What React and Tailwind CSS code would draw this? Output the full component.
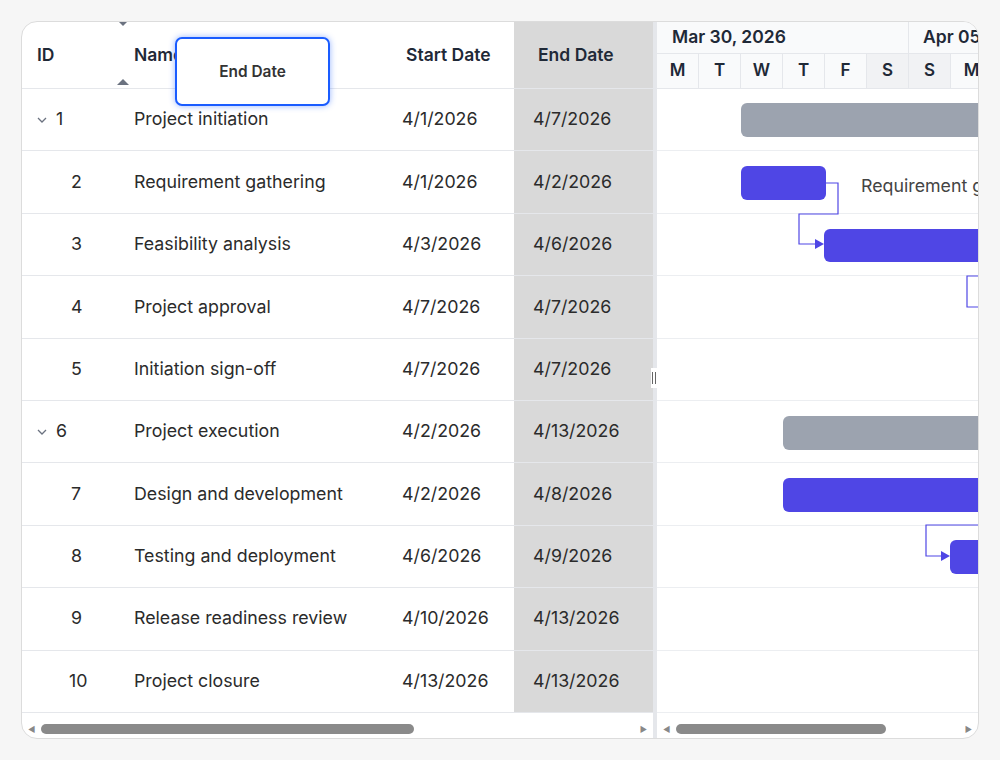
import React from "react";

const rows = [
  { id: 1, name: "Project initiation", s: "4/1/2026", e: "4/7/2026", parent: true },
  { id: 2, name: "Requirement gathering", s: "4/1/2026", e: "4/2/2026" },
  { id: 3, name: "Feasibility analysis", s: "4/3/2026", e: "4/6/2026" },
  { id: 4, name: "Project approval", s: "4/7/2026", e: "4/7/2026" },
  { id: 5, name: "Initiation sign-off", s: "4/7/2026", e: "4/7/2026" },
  { id: 6, name: "Project execution", s: "4/2/2026", e: "4/13/2026", parent: true },
  { id: 7, name: "Design and development", s: "4/2/2026", e: "4/8/2026" },
  { id: 8, name: "Testing and deployment", s: "4/6/2026", e: "4/9/2026" },
  { id: 9, name: "Release readiness review", s: "4/10/2026", e: "4/13/2026" },
  { id: 10, name: "Project closure", s: "4/13/2026", e: "4/13/2026" },
];
const days = ["M", "T", "W", "T", "F", "S", "S", "M"];

export default function App() {
  return (
    <div className="w-[1000px] h-[760px] bg-[#f6f6f6] p-[21px] text-[#1f2937]" style={{ fontFamily: "Inter, 'Noto Sans', sans-serif" }}>
      <div className="relative w-[958px] h-[718px] bg-white border border-[#dcdcdc] rounded-[16px] overflow-hidden flex">
        {/* left grid */}
        <div className="w-[631px] flex flex-col">
          <div className="h-[67px] flex border-b border-[#e5e7eb] text-[17.5px] font-semibold">
            <div className="w-[100px] pl-[15px] flex items-center">ID</div>
            <div className="w-[263px] pl-[12px] flex items-center">Name</div>
            <div className="w-[129px] pl-[21px] flex items-center">Start Date</div>
            <div className="w-[139px] pl-[24px] flex items-center bg-[#d9d9d9]">End Date</div>
          </div>
          {rows.map((r) => (
            <div key={r.id} className="h-[62.4px] flex border-b border-[#e5e7eb] text-[17.8px] text-[#2b2b2b]">
              <div className="w-[100px] flex items-center">
                {r.parent ? (
                  <span className="flex items-center pl-[14px] gap-[8px]">
                    <svg width="12" height="12" viewBox="0 0 12 12"><path d="M2 4l4 4 4-4" fill="none" stroke="#6b7280" strokeWidth="1.3" /></svg>
                    {r.id}
                  </span>
                ) : (
                  <span className={r.id === 10 ? "pl-[47px]" : "pl-[49px]"}>{r.id}</span>
                )}
              </div>
              <div className="w-[263px] pl-[12px] flex items-center whitespace-nowrap">{r.name}</div>
              <div className="w-[129px] pl-[17px] flex items-center">{r.s}</div>
              <div className="w-[139px] pl-[19px] flex items-center bg-[#d9d9d9] whitespace-nowrap">{r.e}</div>
            </div>
          ))}
          <div className="flex-1 flex items-center px-[6px] gap-[6px] pt-[8px]">
            <span className="text-[#888] text-[8px]">◀</span>
            <div className="w-[373px] h-[10px] rounded-full bg-[#8a8a8a]" />
            <div className="flex-1" />
            <span className="text-[#888] text-[8px]">▶</span>
          </div>
        </div>
        {/* splitter */}
        <div className="relative w-[4px] bg-[#e5e7eb]">
          <div className="absolute top-[346px] -left-[2px] w-[6px] h-[20px] bg-white flex items-center justify-center gap-[2px]">
            <div className="w-[1px] h-[12px] bg-[#666]" /><div className="w-[1px] h-[12px] bg-[#666]" />
          </div>
        </div>
        {/* chart */}
        <div className="flex-1 flex flex-col overflow-hidden">
          <div className="h-[67px] border-b border-[#e5e7eb] bg-[#f9fafb] flex flex-col">
            <div className="h-[32px] flex border-b border-[#e5e7eb] text-[17.5px] font-semibold">
              <div className="w-[252px] shrink-0 pl-[15px] flex items-center border-r border-[#e5e7eb] whitespace-nowrap">Mar 30, 2026</div>
              <div className="shrink-0 pl-[14px] flex items-center whitespace-nowrap">Apr 05, 2026</div>
            </div>
            <div className="flex-1 flex text-[17px] font-semibold">
              {days.map((d, i) => (
                <div key={i} className={`w-[42px] shrink-0 flex items-center justify-center border-r border-[#e5e7eb] ${i === 5 || i === 6 ? "bg-[#f1f2f4]" : ""}`}>{d}</div>
              ))}
            </div>
          </div>
          <div className="relative">
            {rows.map((r) => (
              <div key={r.id} className="h-[62.4px] border-b border-[#eceef1]" />
            ))}
            <div className="absolute left-[84px] top-[14px] w-[300px] h-[34px] rounded-[6px] bg-[#9ca3af]" />
            <div className="absolute left-[84px] top-[77px] w-[85px] h-[34px] rounded-[6px] bg-[#4f46e5]" />
            <div className="absolute left-[204px] top-[84px] text-[17.8px] text-[#444] whitespace-nowrap">Requirement gathering</div>
            <div className="absolute left-[167px] top-[140px] w-[300px] h-[33px] rounded-[6px] bg-[#4f46e5]" />
            <div className="absolute left-[126px] top-[327px] w-[300px] h-[34px] rounded-[6px] bg-[#9ca3af]" />
            <div className="absolute left-[126px] top-[389px] w-[300px] h-[34px] rounded-[6px] bg-[#4f46e5]" />
            <div className="absolute left-[293px] top-[451px] w-[100px] h-[34px] rounded-[6px] bg-[#4f46e5]" />
            <svg className="absolute left-0 top-0" width="330" height="500">
              <path d="M169 94 H181 V125 H142 V155 H160" fill="none" stroke="#4f46e5" strokeWidth="1.2" />
              <path d="M158 150 L167 155 L158 160 Z" fill="#4f46e5" />
              <path d="M330 187 H310 V218 H330" fill="none" stroke="#4f46e5" strokeWidth="1.2" />
              <path d="M330 436 H269 V467 H286" fill="none" stroke="#4f46e5" strokeWidth="1.2" />
              <path d="M284 462 L293 467 L284 472 Z" fill="#4f46e5" />
            </svg>
          </div>
          <div className="flex-1 flex items-center px-[6px] gap-[6px] pt-[8px]">
            <span className="text-[#888] text-[8px]">◀</span>
            <div className="w-[210px] h-[10px] rounded-full bg-[#8a8a8a]" />
            <div className="flex-1" />
            <span className="text-[#888] text-[8px]">▶</span>
          </div>
        </div>
        {/* drag indicators */}
        <div className="absolute left-[95px] top-[-2px] w-0 h-0 border-l-[6px] border-r-[6px] border-t-[6px] border-l-transparent border-r-transparent border-t-[#6b7280]" />
        <div className="absolute left-[95px] top-[57px] w-0 h-0 border-l-[6px] border-r-[6px] border-b-[6px] border-l-transparent border-r-transparent border-b-[#6b7280]" />
        <div className="absolute left-[153px] top-[15px] w-[155px] h-[69px] bg-white border-2 border-[#1a5cff] rounded-[7px] shadow-[0_0_6px_rgba(26,92,255,0.45)] flex items-center justify-center text-[15.4px] font-semibold text-[#333]">End Date</div>
      </div>
    </div>
  );
}
